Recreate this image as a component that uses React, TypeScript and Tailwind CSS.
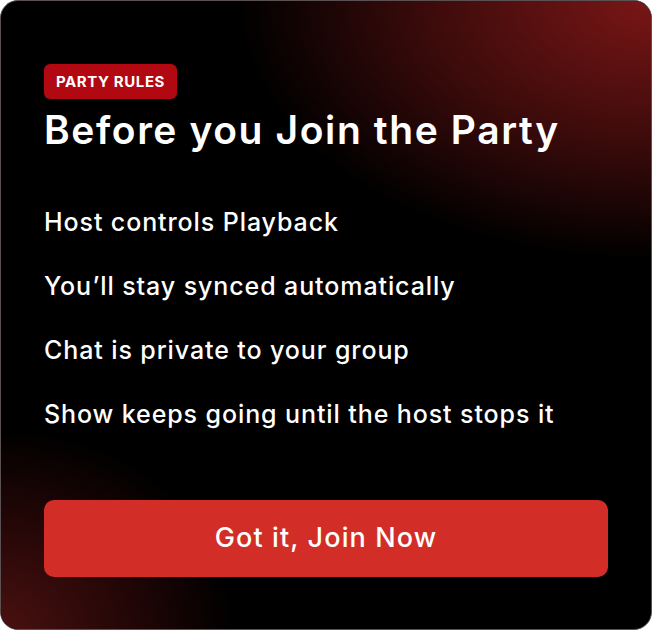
export default function App() {
    const rules = [
        'Host controls Playback',
        'You\u2019ll stay synced automatically',
        'Chat is private to your group',
        'Show keeps going until the host stops it',
    ];

    return (
        <div className="w-[652px] h-[630px] bg-white font-['Inter',sans-serif]">
            <div className="relative w-full h-full overflow-hidden rounded-[18px] border border-[#5b5152] bg-black">
                {/* glow layers */}
                <div className="absolute inset-0 bg-[radial-gradient(ellipse_85%_55%_at_100%_0%,#7a1616_0%,#3d0b0b_40%,rgba(0,0,0,0)_75%)]" />
                <div className="absolute inset-0 bg-[radial-gradient(ellipse_45%_40%_at_0%_100%,#4a1010_0%,#220606_45%,rgba(0,0,0,0)_80%)]" />

                <div className="relative flex flex-col px-[43px] pt-[63px]">
                    <span className="self-start rounded-[6px] bg-[#b10812] px-3 py-[9px] text-[15px] leading-[17px] font-bold tracking-[0.6px] text-white">
                        PARTY RULES
                    </span>
                    <h1 className="mt-[7px] text-[39px] leading-[48px] font-semibold tracking-[1.6px] text-white">
                        Before you Join the Party
                    </h1>

                    <ul className="mt-[53px] flex flex-col gap-[34px]">
                        {rules.map((rule) => (
                            <li key={rule} className="text-[25px] leading-[30px] font-medium tracking-[0.9px] text-white">
                                {rule}
                            </li>
                        ))}
                    </ul>

                    <button className="mt-[71px] h-[77px] w-[564px] rounded-[10px] bg-[#d22e27] text-[27px] font-medium tracking-[1.1px] text-white">
                        Got it, Join Now
                    </button>
                </div>
            </div>
        </div>
    );
}
